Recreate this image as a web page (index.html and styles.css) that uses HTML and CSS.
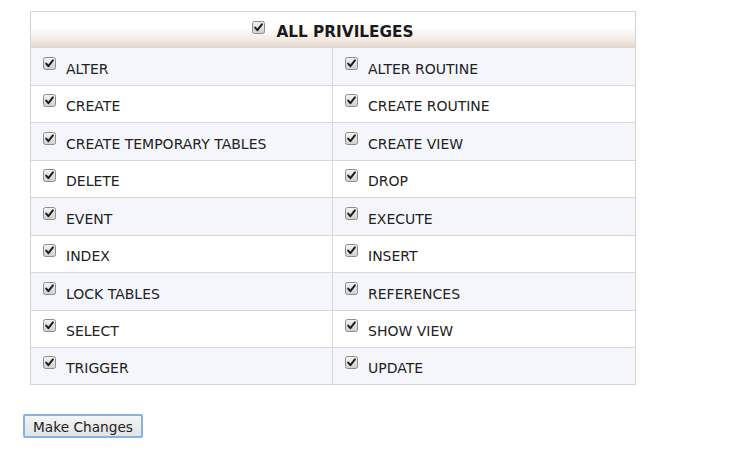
FILE: index.html
```html
<!DOCTYPE html>
<html>
<head>
<meta charset="utf-8">
<link rel="stylesheet" href="styles.css">
</head>
<body>
<div class="page">
  <div class="priv">
    <div class="head">
      <span class="cb"><svg viewBox="0 0 13 13" width="13" height="13"><defs><linearGradient id="g" x1="0" y1="0" x2="0" y2="1"><stop offset="0" stop-color="#f4f4f4"/><stop offset="1" stop-color="#cfcfcf"/></linearGradient></defs><rect x="0.5" y="0.5" width="12" height="12" rx="2" fill="url(#g)" stroke="#8c8c8c"/><path d="M3.2 6.6 L5.4 9.2 L9.9 3.4" fill="none" stroke="#1d1d1d" stroke-width="2" stroke-linecap="round" stroke-linejoin="round"/></svg></span>
      <span class="head-label">ALL PRIVILEGES</span>
    </div>
    <div class="grid" id="grid"></div>
  </div>
  <button class="btn">Make Changes</button>
</div>
<script>
var names = ["ALTER","ALTER ROUTINE","CREATE","CREATE ROUTINE","CREATE TEMPORARY TABLES","CREATE VIEW","DELETE","DROP","EVENT","EXECUTE","INDEX","INSERT","LOCK TABLES","REFERENCES","SELECT","SHOW VIEW","TRIGGER","UPDATE"];
var svg = document.querySelector('.head .cb').innerHTML;
var html = '';
for (var i = 0; i < names.length; i++) {
  var row = Math.floor(i / 2);
  html += '<div class="cell ' + (row % 2 === 0 ? 'odd' : 'even') + (i % 2 === 0 ? ' left' : '') + '"><span class="cb">' + svg + '</span><span class="label">' + names[i] + '</span></div>';
}
document.getElementById('grid').innerHTML = html;
</script>
</body>
</html>
```

FILE: styles.css
```css
html, body {
  margin: 0;
  background: #ffffff;
}
body {
  font-family: "DejaVu Sans", Verdana, sans-serif;
  font-size: 14px;
  color: #222222;
}
.page {
  padding: 11px 0 0 23px;
}
.priv {
  margin-left: 7px;
  width: 606px;
  box-sizing: border-box;
  border: 1px solid #d3d3d3;
  border-bottom: none;
}
.head {
  height: 35px;
  box-sizing: border-box;
  display: flex;
  align-items: center;
  justify-content: center;
  background: linear-gradient(to bottom, #ffffff 0%, #ffffff 45%, #f3e9e1 80%, #e9d9cc 100%);
}
.head .cb {
  margin-bottom: 4px;
  margin-right: 11px;
}
.head-label {
  font-weight: bold;
  font-size: 15.3px;
  margin-top: 5px;
  color: #1a1a1a;
}
.grid {
  display: grid;
  grid-template-columns: 1fr 1fr;
  grid-auto-rows: 37.5px;
}
.cell {
  box-sizing: border-box;
  display: flex;
  align-items: center;
  padding-left: 12px;
  border-top: 1px solid #d8d8d8;
}
.cell:nth-last-child(-n+2) {
  border-bottom: 1px solid #d3d3d3;
}
.cell.left {
  border-right: 1px solid #d8d8d8;
}
.cell.odd {
  background: #f4f6fb;
}
.cell.even {
  background: #ffffff;
}
.cb {
  display: block;
  width: 13px;
  height: 13px;
  flex: none;
}
.cb svg {
  display: block;
}
.cell .cb {
  margin-bottom: 6px;
  margin-right: 10px;
}
.label {
  margin-top: 5px;
}
.btn {
  display: block;
  margin-top: 29px;
  width: 120px;
  height: 24px;
  padding: 2px 0 0;
  font-family: "DejaVu Sans", Verdana, sans-serif;
  font-size: 13.7px;
  color: #222222;
  border: 2px solid #86b3e6;
  border-radius: 2px;
  background: linear-gradient(to bottom, #f4f4f4, #e3e3e3);
}
```
